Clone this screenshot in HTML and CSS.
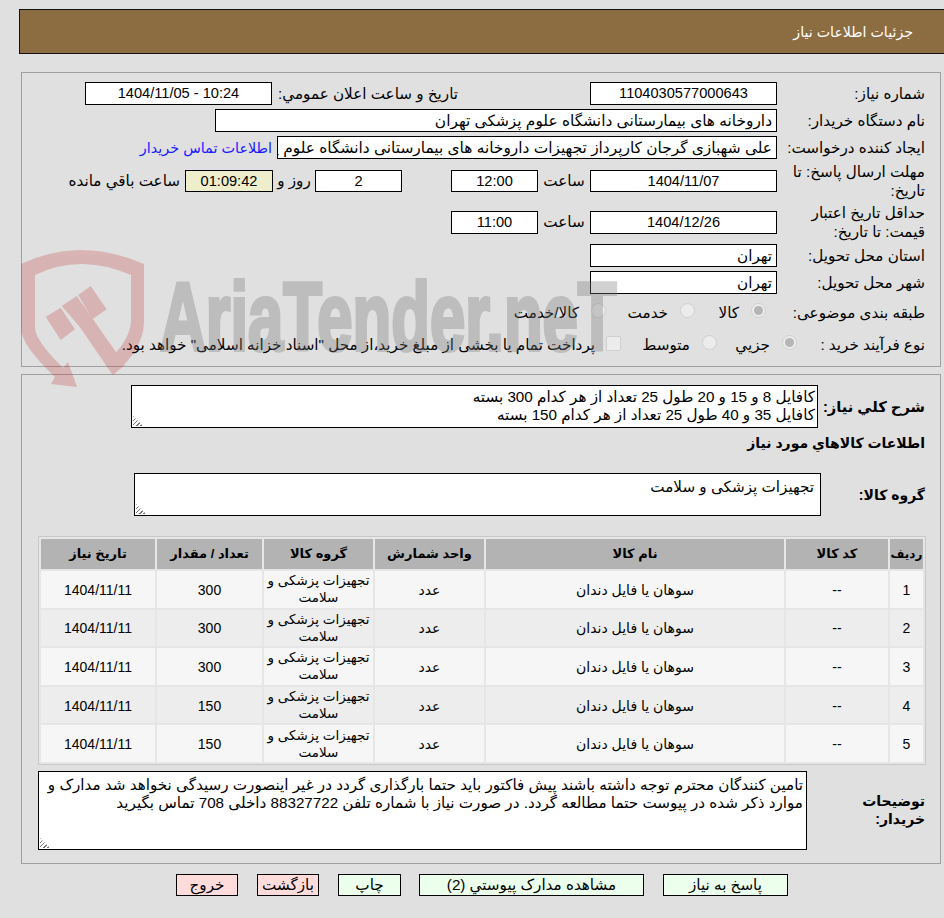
FILE: index.html
```html
<!DOCTYPE html>
<html lang="fa" dir="rtl">
<head>
<meta charset="utf-8">
<title>جزئیات اطلاعات نیاز</title>
<link rel="stylesheet" href="styles.css">
</head>
<body>
<div class="title-bar">جزئیات اطلاعات نیاز</div>

<section class="panel panel-info">
  <div class="row r1">
    <label class="lbl">شماره نیاز:</label>
    <div class="box w-187 center">1104030577000643</div>
    <label class="lbl-mid">تاریخ و ساعت اعلان عمومي:</label>
    <div class="box w-187 center">10:24 - 1404/11/05</div>
  </div>
  <div class="row r2">
    <label class="lbl">نام دستگاه خریدار:</label>
    <div class="box w-562 long">داروخانه های بیمارستانی دانشگاه علوم پزشکی تهران</div>
  </div>
  <div class="row r3">
    <label class="lbl">ایجاد کننده درخواست:</label>
    <div class="box w-500 clip long">علی شهبازی گرجان کارپرداز تجهیزات داروخانه های بیمارستانی دانشگاه علوم پزشکی تهران</div>
    <a class="link">اطلاعات تماس خریدار</a>
  </div>
  <div class="row r4">
    <label class="lbl two">مهلت ارسال پاسخ: تا تاریخ:</label>
    <div class="box h-22 w-187 center">1404/11/07</div>
    <span class="unit">ساعت</span>
    <div class="box h-22 w-87 center">12:00</div>
    <div class="box h-22 w-87 center days">2</div>
    <span class="txt-mid">روز و</span>
    <div class="box h-22 timer center">01:09:42</div>
    <span class="txt-end">ساعت باقي مانده</span>
  </div>
  <div class="row r5">
    <label class="lbl two">حداقل تاریخ اعتبار قیمت: تا تاریخ:</label>
    <div class="box w-187 center">1404/12/26</div>
    <span class="unit">ساعت</span>
    <div class="box w-87 center">11:00</div>
  </div>
  <div class="row r6">
    <label class="lbl">استان محل تحویل:</label>
    <div class="box w-187">تهران</div>
  </div>
  <div class="row r7">
    <label class="lbl">شهر محل تحویل:</label>
    <div class="box w-187">تهران</div>
  </div>
  <div class="row r8">
    <label class="lbl">طبقه بندی موضوعی:</label>
    <div class="opts">
      <span class="opt o-kala"><i class="radio on"></i>کالا</span>
      <span class="opt o-khed"><i class="radio"></i>خدمت</span>
      <span class="opt"><i class="radio"></i>کالا/خدمت</span>
    </div>
  </div>
  <div class="row r9">
    <label class="lbl">نوع فرآیند خرید :</label>
    <div class="opts">
      <span class="opt o-joz"><i class="radio on"></i>جزيي</span>
      <span class="opt o-mot"><i class="radio"></i>متوسط</span>
      <span class="opt"><i class="check"></i>پرداخت تمام یا بخشی از مبلغ خرید،از محل "اسناد خزانه اسلامی" خواهد بود.</span>
    </div>
  </div>
</section>

<section class="panel panel-goods">
  <div class="row g1">
    <label class="lbl-b">شرح کلي نیاز:</label>
    <div class="area a-desc">کافایل 8 و 15 و 20 طول 25 تعداد از هر کدام 300 بسته<br>کافایل 35 و 40 طول 25 تعداد از هر کدام 150 بسته<i class="grip"></i></div>
  </div>
  <h2 class="sub">اطلاعات کالاهاي مورد نیاز</h2>
  <div class="row g2">
    <label class="lbl-b">گروه کالا:</label>
    <div class="area a-group">تجهیزات پزشکی و سلامت<i class="grip"></i></div>
  </div>
  <table class="grid">
    <thead>
      <tr><th class="c1">ردیف</th><th class="c2">کد کالا</th><th class="c3">نام کالا</th><th class="c4">واحد شمارش</th><th class="c5">گروه کالا</th><th class="c6">تعداد / مقدار</th><th class="c7">تاریخ نیاز</th></tr>
    </thead>
    <tbody>
      <tr><td>1</td><td>--</td><td>سوهان یا فایل دندان</td><td>عدد</td><td class="wrap">تجهیزات پزشکی و سلامت</td><td>300</td><td>1404/11/11</td></tr>
      <tr><td>2</td><td>--</td><td>سوهان یا فایل دندان</td><td>عدد</td><td class="wrap">تجهیزات پزشکی و سلامت</td><td>300</td><td>1404/11/11</td></tr>
      <tr><td>3</td><td>--</td><td>سوهان یا فایل دندان</td><td>عدد</td><td class="wrap">تجهیزات پزشکی و سلامت</td><td>300</td><td>1404/11/11</td></tr>
      <tr><td>4</td><td>--</td><td>سوهان یا فایل دندان</td><td>عدد</td><td class="wrap">تجهیزات پزشکی و سلامت</td><td>150</td><td>1404/11/11</td></tr>
      <tr><td>5</td><td>--</td><td>سوهان یا فایل دندان</td><td>عدد</td><td class="wrap">تجهیزات پزشکی و سلامت</td><td>150</td><td>1404/11/11</td></tr>
    </tbody>
  </table>
  <div class="row g3">
    <label class="lbl-b">توضیحات خریدار:</label>
    <div class="area a-note">تامین کنندگان محترم توجه داشته باشند پیش فاکتور باید حتما بارگذاری گردد در غیر اینصورت رسیدگی نخواهد شد مدارک و<br>موارد ذکر شده در پیوست حتما مطالعه گردد. در صورت نیاز با شماره تلفن 88327722 داخلی 708 تماس بگیرید<i class="grip"></i></div>
  </div>
</section>

<div class="actions">
  <button class="btn ok b1">پاسخ به نیاز</button>
  <button class="btn ok b2">مشاهده مدارک پیوستي (2)</button>
  <button class="btn ok b3">چاپ</button>
  <button class="btn no b4">بازگشت</button>
  <button class="btn no b4">خروج</button>
</div>

<div class="watermark" aria-hidden="true" dir="ltr">
  <svg class="wm-shield" viewBox="0 0 125 140" width="125" height="140">
    <g class="wm-red">
      <path d="M0 14 Q59 -14 123 14 L123 73 Q122 100 92 125 L84 114 Q110 90 110 70 L110 25 Q59 3 14 25 L14 78 Q14 90 42 118 L47 112 L56 137 L30 134 L34 127 Q0 95 0 78 Z"/>
      <path d="M24.7 66.7 L39.7 57.7 L54 79.3 L39.7 90 Z"/>
      <path d="M40.7 56 L55.7 46 L71.3 68.3 L104 115 L91.7 125 L59 77.3 Z"/>
      <path d="M57.3 45 L69.7 36 L85.7 59.3 L71.3 69.3 Z"/>
    </g>
  </svg>
  <span class="wm-text">AriaTender.neT</span>
</div>
</body>
</html>
```
FILE: styles.css
```css
* { box-sizing: border-box; }
html, body { margin: 0; padding: 0; }
body {
  position: relative;
  width: 944px;
  height: 918px;
  overflow: hidden;
  background: #e0e0e0;
  color: #000;
  font-family: "Liberation Sans", "DejaVu Sans", sans-serif;
  font-size: 15.2px;
  line-height: 18px;
  padding-top: 9px;
}
.title-bar {
  margin-left: 19px;
  height: 45px;
  background: #8c6d42;
  border: 1px solid #111;
  border-right: 0;
  color: #fff;
  font-size: 14.2px;
  line-height: 44px;
  padding-right: 31px;
}
.panel {
  margin: 18px 3px 0 21px;
  border: 1px solid #a0a0a0;
  position: relative;
}
.panel-info { height: 295px; padding-top: 9px; }
.panel-goods { margin-top: 7px; height: 490px; padding-top: 10px; }

.row { display: flex; align-items: center; }
.lbl { width: 163px; padding-right: 15px; flex: none; }
.lbl.two { line-height: 19px; padding-left: 12px; }
.lbl-mid { width: 318px; padding-right: 132px; flex: none; white-space: nowrap; }
.box {
  height: 23px;
  border: 1px solid #000;
  background: #fff;
  padding: 0 4px;
  line-height: 21px;
  white-space: nowrap;
  flex: none;
}
.h-22 { height: 22px; }
.center { text-align: center; font-size: 14.6px; }
.long { font-size: 15.4px; }
.w-187 { width: 187px; }
.w-87 { width: 87px; }
.w-562 { width: 562px; }
.w-500 { width: 500px; }
.clip { overflow: hidden; }
.r1, .r2, .r3, .r6, .r7 { height: 23px; }
.r2, .r3, .r6, .r7 { margin-top: 4px; }
.r3 .clip { margin-left: 5px; }
.link { color: #1a1aff; white-space: nowrap; font-size: 14.4px; }
.r4 { margin-top: 4px; height: 36px; }
.r5 { margin-top: 5px; height: 36px; }
.r8 { margin-top: 4px; height: 30px; }
.r9 { margin-top: 2px; height: 30px; }
.r9 .lbl { width: 143px; }
.unit { width: 52px; text-align: center; flex: none; }
.days { margin-right: 49px; }
.txt-mid { width: 42px; text-align: center; flex: none; white-space: nowrap; }
.txt-end { margin-right: 5px; white-space: nowrap; }
.timer { width: 88px; background: #eeeecd; }
.opts { display: flex; align-items: center; }
.r8 .opts { margin-right: 11px; }
.opt { display: inline-flex; align-items: center; white-space: nowrap; }
.o-kala { width: 71px; }
.o-khed { width: 89px; }
.o-joz { width: 80px; }
.o-mot { width: 96px; }
.radio {
  width: 15px; height: 15px; border-radius: 50%;
  border: 1px solid #cfcfcf; background: #ececec;
  margin: 0 0 5px 12px; flex: none; position: relative;
}
.radio.on::after {
  content: ""; position: absolute; inset: 2px;
  border-radius: 50%; background: #b5b5b5;
}
.check {
  width: 15px; height: 15px; border: 1px solid #cfcfcf;
  background: #ececec; border-radius: 2px;
  margin: 0 0 4px 11px; flex: none;
}
.lbl-b { font-weight: 700; font-size: 14px; padding-right: 15px; flex: none; }
.area {
  border: 1px solid #000;
  background: #fff;
  position: relative;
  flex: none;
  padding: 2px;
  white-space: nowrap;
}
.grip {
  position: absolute; left: 1px; bottom: 1px; width: 10px; height: 10px;
  background: repeating-linear-gradient(135deg, #777 0 1px, transparent 1px 3px);
  clip-path: polygon(0 0, 100% 100%, 0 100%);
}
.g1 { height: 43px; }
.g1 .lbl-b { width: 122px; font-size: 14.7px; white-space: nowrap; }
.a-desc { width: 687px; height: 43px; }
.sub { margin: 5px 15px 0 0; font-size: 14px; font-weight: 700; line-height: 20px; }
.g2 { margin-top: 20px; height: 43px; }
.g2 .lbl-b { width: 119px; }
.a-group { width: 687px; height: 43px; padding: 4px 6px; }
.grid {
  margin: 20px 14px 0 16px;
  width: 888px;
  border: 1px solid #c8c8c8;
  border-collapse: separate;
  border-spacing: 2px;
  background: #e6e6e6;
  table-layout: fixed;
  font-size: 14px;
}
.grid th {
  background: #b3b3b3; height: 30px; padding: 0;
  font-weight: 700; font-size: 13px;
}
.grid th.c1 { font-size: 12px; }
.grid td {
  height: 36.6px; padding: 2px 1px 0; text-align: center; line-height: 17px; background: #f6f6f6;
}
.grid td.wrap { font-size: 13.5px; padding: 0; }
.grid tbody tr:nth-child(even) td { background: #ededed; }
.c1 { width: 33px; }
.c2 { width: 102px; }
.c3 { width: 298px; }
.c4 { width: 109px; }
.c5 { width: 109px; }
.c6 { width: 105px; }
.c7 { width: 114px; }
.g3 { margin: 6px 0 0 16px; height: 79px; }
.g3 .lbl-b { width: 133px; line-height: 18px; padding-left: 15px; }
.a-note { flex: 1; height: 79px; padding: 4px 3px; }
.actions {
  margin: 10px 0 0;
  display: flex;
  padding-right: 156px;
  gap: 19px;
}
.btn {
  font: inherit; height: 22px; border: 1px solid #000; padding: 0; color: #000; cursor: pointer;
}
.ok { background: #ecffec; }
.no { background: #ffdcdc; }
.b1 { width: 125px; }
.b2 { width: 225px; }
.b3 { width: 63px; margin-right: -1px; }
.b4 { width: 62px; }
.watermark {
  position: absolute; left: 21px; top: 250px; width: 610px; height: 140px;
  pointer-events: none; display: flex; align-items: flex-start;
}
.wm-shield { flex: none; }
.wm-red { fill: #bd1a1a; opacity: .22; }
.wm-text {
  margin: 19px 0 0 14px;
  font-family: "Liberation Sans", sans-serif;
  font-weight: 700; font-size: 96px; line-height: 96px;
  color: #777; opacity: .33;
  -webkit-text-stroke: 4px #777;
  transform: scaleX(.66); transform-origin: left top; white-space: nowrap;
}
```
